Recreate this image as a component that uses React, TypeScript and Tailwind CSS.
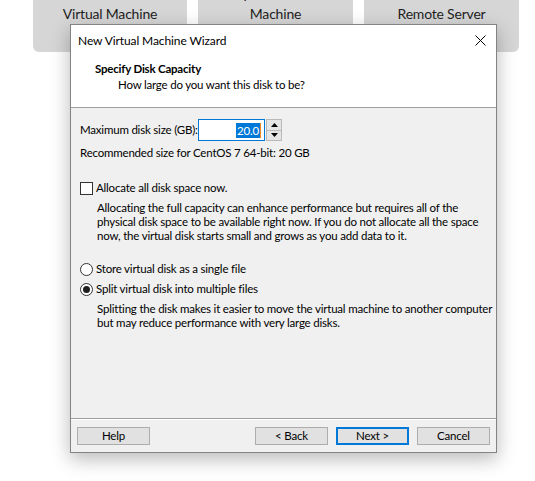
const ui = { fontFamily: 'Lato, "Noto Sans", sans-serif' }

function HomeCard({ top, bottom }: { top: string; bottom: string }) {
  return (
    <div className="h-[92px] rounded-b-[6px] bg-[#d6d6d6] pt-[24px] text-center text-[14px] leading-[20px] tracking-[-0.2px] text-[#1e1e1e]">
      <div>{top}</div>
      <div>{bottom}</div>
    </div>
  )
}

function WinButton({ label, primary }: { label: string; primary?: boolean }) {
  return (
    <div
      className={
        primary
          ? "flex h-[18px] w-[73px] items-center justify-center border-2 border-[#0078d7] bg-[#e1e1e1] text-black"
          : "flex h-[18px] w-[73px] items-center justify-center border border-[#adadad] bg-[#e1e1e1] text-black"
      }
    >
      {label}
    </div>
  )
}

function Radio({ checked }: { checked?: boolean }) {
  return (
    <div className="flex h-[13px] w-[13px] items-center justify-center rounded-full border border-[#333333] bg-white">
      {checked && <div className="h-[7px] w-[7px] rounded-full bg-[#1e1e1e]" />}
    </div>
  )
}

function Spinner() {
  return (
    <div className="ml-[1px] flex h-[22px] w-[16px] flex-col border border-[#b9b9b9] bg-[#f0f0f0]">
      <div className="flex flex-1 items-center justify-center border-b border-[#b9b9b9] bg-[#e5e5e5]">
        <svg width="7" height="4" viewBox="0 0 7 4">
          <path d="M3.5 0L7 4H0z" fill="#000" />
        </svg>
      </div>
      <div className="flex flex-1 items-center justify-center bg-[#e5e5e5]">
        <svg width="7" height="4" viewBox="0 0 7 4">
          <path d="M0 0h7L3.5 4z" fill="#000" />
        </svg>
      </div>
    </div>
  )
}

export default function App() {
  return (
    <div className="relative h-[481px] w-[535px] overflow-hidden bg-white" style={ui}>
      <div className="-mt-[40px] ml-[33px] flex gap-[11px]">
        <div className="w-[154px]">
          <HomeCard top="Create a New" bottom="Virtual Machine" />
        </div>
        <div className="w-[155px]">
          <HomeCard top="Open a Virtual" bottom="Machine" />
        </div>
        <div className="w-[155px]">
          <HomeCard top="Connect to a" bottom="Remote Server" />
        </div>
      </div>

      <div className="absolute left-[70px] top-[24px] flex h-[429px] w-[427px] flex-col border border-[#838383] bg-[#f0f0f0] text-[11.5px] tracking-[-0.2px] whitespace-nowrap text-black shadow-[0_6px_18px_rgba(0,0,0,0.28)]">
        <div className="flex h-[31px] items-center justify-between bg-white pl-[7px] pr-[10px]">
          <span className="text-[12px] tracking-[-0.1px]">New Virtual Machine Wizard</span>
          <svg width="11" height="11" viewBox="0 0 11 11">
            <path d="M0.5 0.5L10.5 10.5M10.5 0.5L0.5 10.5" stroke="#000" strokeWidth="1" />
          </svg>
        </div>
        <div className="h-[52px] border-b border-[#a0a0a0] bg-white">
          <div className="mt-[5px] pl-[24px] font-bold leading-[16px]">Specify Disk Capacity</div>
          <div className="pl-[47px] leading-[16px]">How large do you want this disk to be?</div>
        </div>

        <div className="flex-1 pl-[9px]">
          <div className="mt-[11px] flex h-[22px] items-center">
            <span className="w-[118px]">Maximum disk size (GB):</span>
            <div className="flex h-[22px] w-[67px] items-center justify-end border border-[#0078d7] bg-white pr-[3px]">
              <span className="bg-[#0078d7] px-[1px] leading-[15px] text-white">20.0</span>
              <span className="h-[15px] w-[1px] bg-[#f08a24]" />
            </div>
            <Spinner />
          </div>
          <div className="mt-[5px] leading-[14px]">Recommended size for CentOS 7 64-bit: 20 GB</div>

          <div className="mt-[21px] flex h-[14px] items-center gap-[3px]">
            <div className="h-[13px] w-[13px] border border-[#333333] bg-white" />
            <span>Allocate all disk space now.</span>
          </div>
          <div className="mt-[6px] pl-[17px] leading-[14px]">
            Allocating the full capacity can enhance performance but requires all of the
            <br />
            physical disk space to be available right now. If you do not allocate all the space
            <br />
            now, the virtual disk starts small and grows as you add data to it.
          </div>

          <div className="mt-[19px] flex h-[14px] items-center gap-[3px]">
            <Radio />
            <span>Store virtual disk as a single file</span>
          </div>
          <div className="mt-[6px] flex h-[14px] items-center gap-[3px]">
            <Radio checked />
            <span>Split virtual disk into multiple files</span>
          </div>
          <div className="mt-[6px] pl-[17px] leading-[14px]">
            Splitting the disk makes it easier to move the virtual machine to another computer
            <br />
            but may reduce performance with very large disks.
          </div>
        </div>

        <div className="border-t border-[#a0a0a0]">
          <div className="flex h-[33px] items-start border-t border-white px-[6px] pt-[7px]">
            <WinButton label="Help" />
            <div className="flex-1" />
            <div className="flex gap-[8px]">
              <WinButton label="< Back" />
              <WinButton label="Next >" primary />
              <WinButton label="Cancel" />
            </div>
          </div>
        </div>
      </div>
    </div>
  )
}
